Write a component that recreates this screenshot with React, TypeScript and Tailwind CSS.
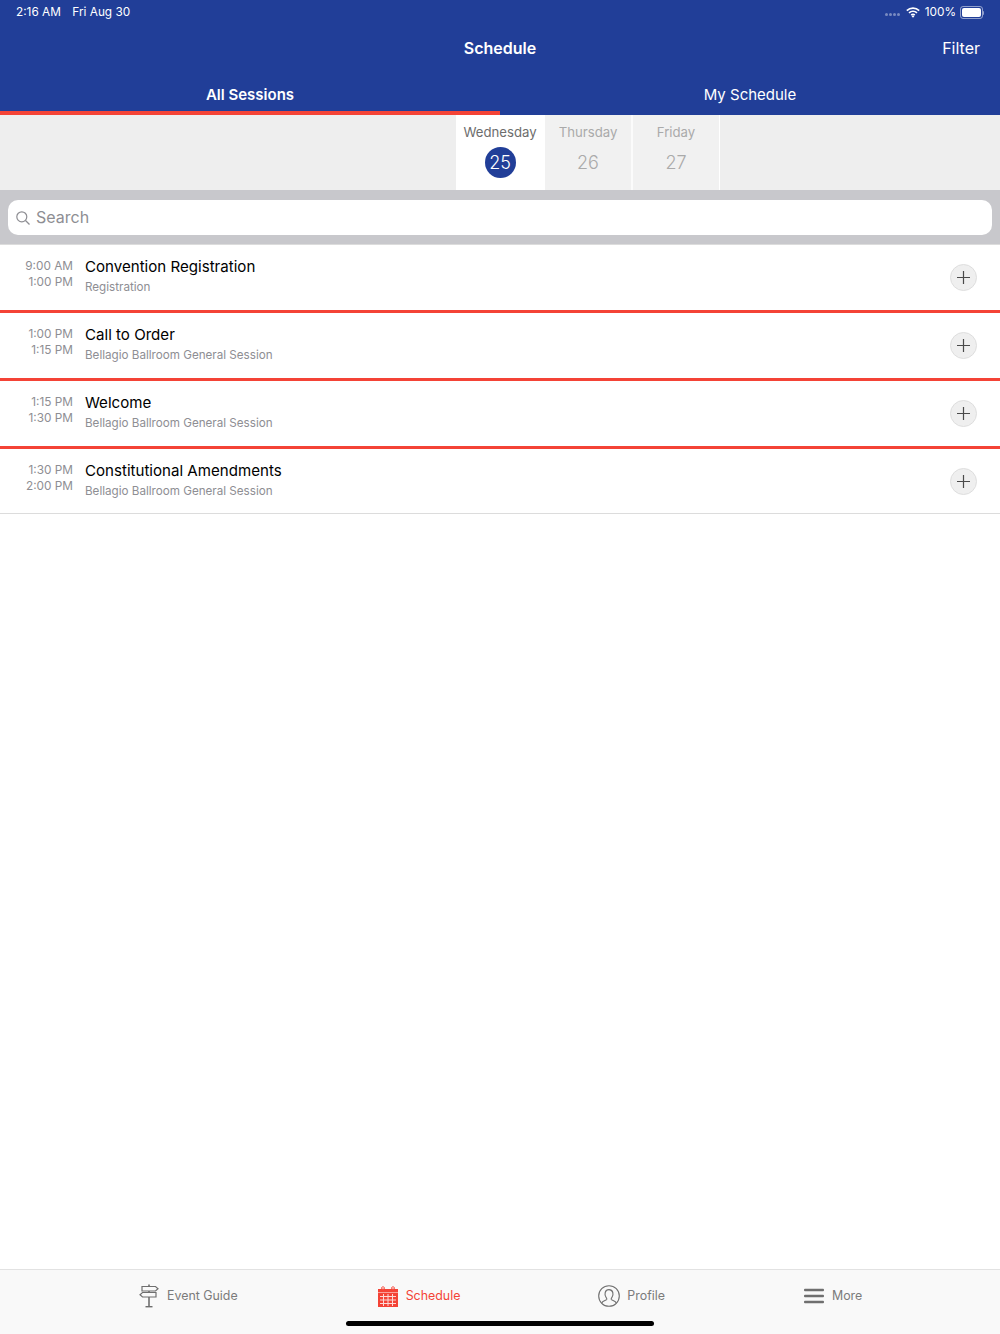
import React from "react";

const rows = [
  { a: "9:00 AM", b: "1:00 PM", t: "Convention Registration", s: "Registration", red: true },
  { a: "1:00 PM", b: "1:15 PM", t: "Call to Order", s: "Bellagio Ballroom General Session", red: true },
  { a: "1:15 PM", b: "1:30 PM", t: "Welcome", s: "Bellagio Ballroom General Session", red: true },
  { a: "1:30 PM", b: "2:00 PM", t: "Constitutional Amendments", s: "Bellagio Ballroom General Session", red: false },
];

function Wifi() {
  return (
    <svg width="14" height="11" viewBox="0 0 14 11" fill="none" stroke="white" strokeWidth="1.7">
      <path d="M0.8 3.6C4.3 0.4 9.7 0.4 13.2 3.6" />
      <path d="M3 5.9C5.3 3.9 8.7 3.9 11 5.9" />
      <path d="M5.2 8C6.2 7.2 7.8 7.2 8.8 8" />
      <path d="M7 10.8L5.6 9.2C6.4 8.6 7.6 8.6 8.4 9.2Z" fill="white" stroke="none" />
    </svg>
  );
}

function Signpost() {
  return (
    <svg width="20" height="24" viewBox="0 0 20 24" fill="none" stroke="#6f6f6f" strokeWidth="1.2">
      <path d="M3 2.5H16.5L19 4.7L16.5 7H3Z" />
      <path d="M17 8.5H3.5L1 10.7L3.5 13H17Z" />
      <path d="M10 0.5V2.5M10 7V8.5M10 13V22.5" strokeWidth="1.6" />
      <path d="M6.5 22.7H13.5" strokeWidth="1.4" />
    </svg>
  );
}

function CalendarIcon() {
  return (
    <svg width="20" height="21" viewBox="0 0 20 21">
      <path d="M0 3H3.5V1.5H6.5V3H13.5V1.5H16.5V3H20V21H0Z" fill="#f44336" />
      <g stroke="#fff" strokeWidth="1" opacity="0.8">
        <path d="M2 10.5H18M2 14H18M2 17.5H18" />
        <path d="M5.5 8V20M10 8V20M14.5 8V20" />
      </g>
      <rect x="0" y="6" width="20" height="1" fill="#fff" opacity="0.5" />
      <circle cx="5" cy="2" r="1.3" fill="#fff" stroke="#f44336" strokeWidth="0.8" />
      <circle cx="15" cy="2" r="1.3" fill="#fff" stroke="#f44336" strokeWidth="0.8" />
    </svg>
  );
}

function ProfileIcon() {
  return (
    <svg width="22" height="22" viewBox="0 0 22 22" fill="none" stroke="#6f6f6f" strokeWidth="1.1">
      <circle cx="11" cy="11" r="10.3" />
      <path d="M3.8 18C4.5 15.8 8.3 15.6 8.8 14.4C9 13.6 8.6 13.2 8 12.3C7 10.8 6.8 9 7.2 7.5C7.8 5.4 9.4 4.6 11 4.6C12.6 4.6 14.2 5.4 14.8 7.5C15.2 9 15 10.8 14 12.3C13.4 13.2 13 13.6 13.2 14.4C13.7 15.6 17.5 15.8 18.2 18" />
    </svg>
  );
}

function Tab({ icon, label, active, className }: { icon: React.ReactNode; label: string; active?: boolean; className: string }) {
  return (
    <div className={`flex h-6 items-center ${className}`}>
      {icon}
      <span className={`text-[12.4px] ${active ? "text-[#f44336]" : "text-[#7b7b7b]"}`}>{label}</span>
    </div>
  );
}

export default function App() {
  return (
    <div className="relative flex h-[1334px] w-[1000px] flex-col overflow-hidden bg-white font-['Inter','Liberation_Sans',sans-serif]">
      <header className="h-[115px] shrink-0 bg-[#213e98] text-white">
        <div className="flex h-6 items-center justify-between pl-4 pr-[16px] pt-[1px] text-[11.8px]">
          <div className="flex gap-[11.5px]">
            <span>2:16 AM</span>
            <span>Fri Aug 30</span>
          </div>
          <div className="flex items-center">
            <div className="mr-[6px] mt-[3px] flex gap-[1px]">
              <i className="h-[3px] w-[3px] rounded-full bg-white/40" />
              <i className="h-[3px] w-[3px] rounded-full bg-white/40" />
              <i className="h-[3px] w-[3px] rounded-full bg-white/40" />
              <i className="h-[3px] w-[3px] rounded-full bg-white/40" />
            </div>
            <Wifi />
            <span className="ml-[5px]">100%</span>
            <div className="ml-1 h-[13px] w-[23px] rounded-[3px] border border-white/50 p-[1px]">
              <div className="h-full w-full rounded-[2px] bg-white" />
            </div>
            <div className="h-1 w-[1px] rounded-r bg-white/50" />
          </div>
        </div>
        <div className="relative flex h-[48px] items-center justify-center">
          <span className="text-[16px] font-semibold">Schedule</span>
          <span className="absolute right-5 text-[16px]">Filter</span>
        </div>
        <div className="flex h-[43px]">
          <div className="flex w-1/2 items-center justify-center border-b-4 border-[#f44336] pt-[7px] text-[15px] font-semibold">All Sessions</div>
          <div className="flex w-1/2 items-center justify-center pt-[3px] text-[15px]">My Schedule</div>
        </div>
      </header>

      <div className="flex h-[76px] shrink-0 border-b border-[#c8c8cc] bg-[#eeeeee] pl-[456px]">
        <div className="flex h-[75px] w-[89px] flex-col items-center bg-white pr-[1px] pt-[7px]">
          <span className="text-[13.2px] leading-[20px] text-[#6d6d6d]">Wednesday</span>
          <span className="mt-[5px] flex h-[31px] w-[31px] items-center justify-center rounded-full bg-[#213e98] text-[18px] font-light text-white">25</span>
        </div>
        <div className="flex h-[75px] w-[88px] flex-col items-center border-r-2 border-white/70 bg-[#f1f1f1] pt-[7px] text-[#aaaaaa]">
          <span className="text-[13.2px] leading-[20px]">Thursday</span>
          <span className="mt-[5px] flex h-[31px] items-center text-[18px] font-light">26</span>
        </div>
        <div className="flex h-[75px] w-[87px] flex-col items-center border-r border-white bg-[#f1f1f1] pt-[7px] text-[#aaaaaa]">
          <span className="text-[13.2px] leading-[20px]">Friday</span>
          <span className="mt-[5px] flex h-[31px] items-center text-[18px] font-light">27</span>
        </div>
      </div>

      <div className="h-[54px] shrink-0 border-b border-[#dcdcdc] bg-[#c8c8cc] px-2 pt-[9px]">
        <div className="flex h-[35px] items-center rounded-[10px] bg-white pb-[2px] pl-2 text-[16px] text-[#8e8e93]">
          <svg width="14" height="14" viewBox="0 0 14 14" fill="none" stroke="#8e8e93" strokeWidth="1.2" className="mt-[2px]">
            <circle cx="5.8" cy="5.8" r="5" />
            <path d="M9.5 9.5L13.5 13.5" />
          </svg>
          <span className="ml-[6px]">Search</span>
        </div>
      </div>

      <main className="flex-1">
        {rows.map((r) => (
          <div key={r.t} className={`flex items-start pr-[23px] ${r.red ? "h-[68px] border-b-[3px] border-[#f44336]" : "h-[65px] border-b border-[#dcdcdc]"}`}>
            <div className="mt-[13px] w-[73px] shrink-0 text-right text-[11.8px] leading-[16px] text-[#8e8e93]">
              <div>{r.a}</div>
              <div>{r.b}</div>
            </div>
            <div className="ml-3 mt-[11px] flex-1">
              <div className="text-[15.1px] leading-[22px] text-black">{r.t}</div>
              <div className="mt-[1px] text-[11.65px] leading-[16px] text-[#8e8e93]">{r.s}</div>
            </div>
            <div className="mt-[19px] flex h-[27px] w-[27px] items-center justify-center rounded-full border border-[#dedede] bg-[#efefef]">
              <svg width="13" height="13" viewBox="0 0 13 13" stroke="#4a4a4a" strokeWidth="1.2">
                <path d="M6.5 0V13M0 6.5H13" />
              </svg>
            </div>
          </div>
        ))}
      </main>

      <footer className="relative flex h-[65px] shrink-0 border-t border-[#e2e2e2] bg-[#f9f9f9] pt-[14px]">
        <Tab className="ml-[139px] gap-2" icon={<Signpost />} label="Event Guide" />
        <Tab className="ml-[140px] gap-2" icon={<CalendarIcon />} label="Schedule" active />
        <Tab className="ml-[138px] gap-[7px]" icon={<ProfileIcon />} label="Profile" />
        <Tab className="ml-[139px] gap-2" icon={
          <svg width="20" height="16" viewBox="0 0 20 16" fill="#6f6f6f"><rect width="20" height="2.4" y="0.8" rx="1" /><rect width="20" height="2.4" y="6.8" rx="1" /><rect width="20" height="2.4" y="12.8" rx="1" /></svg>
        } label="More" />
        <div className="absolute bottom-[8px] left-[346px] h-[5px] w-[308px] rounded-full bg-black" />
      </footer>
    </div>
  );
}
